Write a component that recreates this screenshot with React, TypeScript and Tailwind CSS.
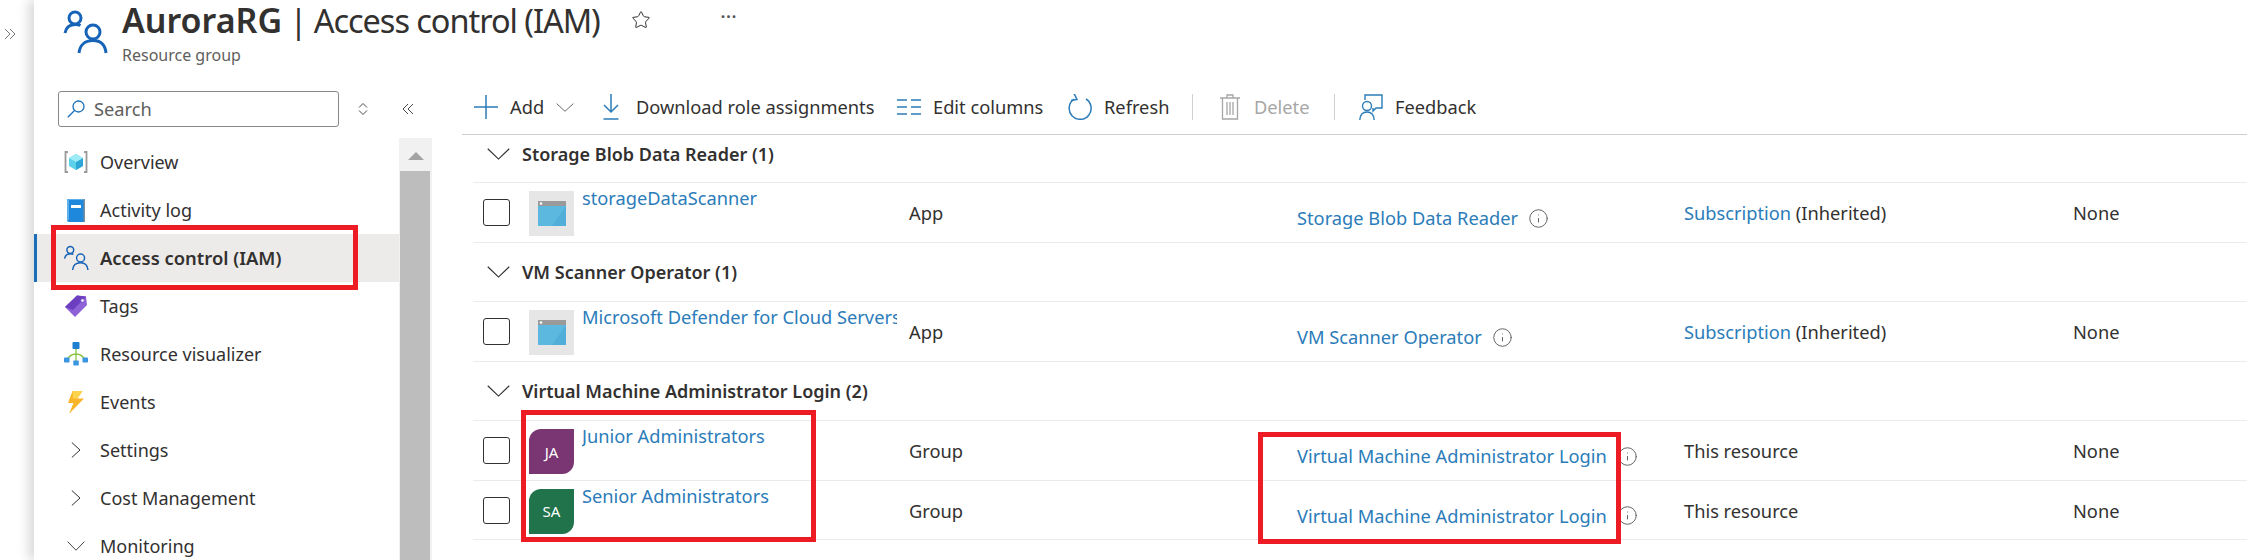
import { Info, Star } from "lucide-react";
import type { ReactNode } from "react";

const UsersIcon = ({ className, weight }: { className: string; weight: string }) => (
  <svg viewBox="0 0 42 42" fill="none" stroke="#1763b8" strokeWidth={weight} className={`overflow-visible ${className}`}>
    <circle cx="11" cy="7" r="6" />
    <path d="M1 22c1-6 5-8.500 10.500-8.500 2 0 3.600.3 5 1" />
    <circle cx="29" cy="21" r="7" />
    <path d="M15 42c.8-8 6-12.500 14-12.500S41.200 34 42 42" />
  </svg>
);

const OverviewIcon = () => (
  <svg viewBox="0 0 24 24" className="w-[24px] h-[24px]">
    <path d="M4 2H1.500v20H4M20 2h2.500v20H20" fill="none" stroke="#9a9a9a" strokeWidth="1.800" />
    <path d="M12 4l7 4v8l-7 4-7-4V8z" fill="#5ed0ea" />
    <path d="M12 12l7-4v8l-7 4z" fill="#2fa6d8" />
    <path d="M12 12L5 8l7-4 7 4z" fill="#9debf7" />
  </svg>
);

const ActivityIcon = () => (
  <svg viewBox="0 0 24 24" className="w-[24px] h-[24px]">
    <path d="M3 1h18v23H5a2 2 0 0 1-2-2z" fill="#1e88dc" />
    <path d="M3 1h18v1H5v20H3z" fill="#5fb0ea" />
    <rect x="7" y="7" width="10" height="3" fill="#ffffff" />
    <rect x="19.500" y="1" width="1.500" height="23" fill="#7f8c99" />
  </svg>
);

const TagIcon = () => (
  <svg viewBox="0 0 24 24" className="w-[24px] h-[24px]">
    <path d="M1 13L13 1.500l9 1 1 8.500L11 23z" fill="#8e62d6" />
    <path d="M1 13L13 1.500l9 1-13 13.500z" fill="#6b3fc0" />
    <circle cx="18.500" cy="6.500" r="1.800" fill="#f0e8fb" stroke="#6b3fc0" strokeWidth="0.6" />
  </svg>
);

const VisualizerIcon = () => (
  <svg viewBox="0 0 24 24" className="w-[24px] h-[24px]">
    <path d="M12 6v16M3 18c2-4 5-6 9-6s7 2 9 6" fill="none" stroke="#86c440" strokeWidth="1.300" />
    <rect x="8.500" y="0" width="7" height="7" rx="1" fill="#1f7fd0" />
    <rect x="0" y="15.500" width="5.500" height="5" rx="0.800" fill="#3a96e0" />
    <rect x="9.300" y="18.500" width="5.500" height="5" rx="0.800" fill="#3a96e0" />
    <rect x="18.500" y="15.500" width="5.500" height="5" rx="0.800" fill="#3a96e0" />
  </svg>
);

const BoltIcon = () => (
  <svg viewBox="0 0 24 24" className="w-[24px] h-[24px]">
    <path d="M8.500 1h10l-5 7.500h6.500L5 24l4.500-11H4z" fill="#f9b52a" />
    <path d="M8.500 1h10l-5 7.500H9z" fill="#fcd34d" />
  </svg>
);

const SearchIcon = () => (
  <svg viewBox="0 0 18 18" fill="none" stroke="#1a6fb8" strokeWidth="1.300" className="w-[18px] h-[18px]">
    <circle cx="11.500" cy="6.500" r="5.500" />
    <path d="M7.500 10.500L.8 17.300" />
  </svg>
);

const SortIcon = () => (
  <svg viewBox="0 0 12 14" fill="none" stroke="#4a4a4a" strokeWidth="1" className="w-[12px] h-[14px]">
    <path d="M2 5.500L6 1.500l4 4M2 8.500l4 4 4-4" />
  </svg>
);

const DoubleChevron = ({ left, color }: { left?: boolean; color: string }) => (
  <svg viewBox="0 0 12 12" fill="none" stroke={color} strokeWidth="1" className="w-[12px] h-[12px]">
    <path d={left ? "M6 1L1 6l5 5M11 1L6 6l5 5" : "M1 1l5 5-5 5M6 1l5 5-5 5"} />
  </svg>
);

const ChevronOpen = ({ className, color }: { className: string; color: string }) => (
  <svg viewBox="0 0 24 13" fill="none" stroke={color} strokeWidth="1.200" preserveAspectRatio="none" className={className}>
    <path d="M.8 .8L12 12 23.200 .8" />
  </svg>
);

const ChevronClosed = () => (
  <svg viewBox="0 0 10 16" fill="none" stroke="#323130" strokeWidth="1" className="w-[10px] h-[16px]">
    <path d="M.8 .5L9 8 .8 15.500" />
  </svg>
);

const PlusIcon = () => (
  <svg viewBox="0 0 24 24" fill="none" stroke="#2b7cb9" strokeWidth="1.500" className="w-[24px] h-[24px]">
    <path d="M12 0v24M0 12h24" />
  </svg>
);

const DownloadIcon = () => (
  <svg viewBox="0 0 16 26" fill="none" stroke="#2b7cb9" strokeWidth="1.500" className="w-[16px] h-[26px]">
    <path d="M8 0v17M1 11l7 7 7-7M0.500 25h15" />
  </svg>
);

const ColumnsIcon = () => (
  <svg viewBox="0 0 24 16" fill="none" stroke="#2b7cb9" strokeWidth="1.500" className="w-[24px] h-[16px]">
    <path d="M0 1h10M14 1h10M0 8h10M14 8h10M0 15h10M14 15h10" />
  </svg>
);

const RefreshIcon = () => (
  <svg viewBox="0 0 24 26" fill="none" stroke="#2b7cb9" strokeWidth="1.500" className="w-[24px] h-[26px]">
    <path d="M18 5a11 11 0 1 1-12 .2" />
    <path d="M4 0l3 6-6 1" transform="translate(2 -0.500)" />
  </svg>
);

const TrashIcon = () => (
  <svg viewBox="0 0 20 26" fill="none" stroke="#a6a6a6" strokeWidth="1.300" className="w-[20px] h-[26px]">
    <path d="M0 4h20M7 4V1h6v3M2.500 4v21h15V4M7 8v13M10 8v13M13 8v13" />
  </svg>
);

const FeedbackIcon = () => (
  <svg viewBox="0 0 24 26" fill="none" stroke="#2b7cb9" strokeWidth="1.400" className="w-[24px] h-[26px]">
    <path d="M6 6V1h17v13h-6l-3 3v-3" />
    <circle cx="8" cy="12" r="4.500" />
    <path d="M.8 26c.3-5 3-8 7.200-8s6.900 3 7.200 8" />
  </svg>
);

const WindowAvatar = () => (
  <div className="w-[45px] h-[45px] bg-[#e6e6e6] flex items-center justify-center">
    <svg viewBox="0 0 28 25" className="w-[28px] h-[25px]">
      <rect width="28" height="25" fill="#5db8e0" />
      <path d="M28 5v20H14z" fill="#51aed9" />
      <rect width="28" height="5" fill="#9a9a9a" />
      <circle cx="3" cy="2.500" r="1.300" fill="#ffffff" />
    </svg>
  </div>
);

const Button = ({ icon, label, width, muted }: { icon: ReactNode; label: string; width: string; muted?: boolean }) => (
  <div className={`flex items-center gap-[12px] shrink-0 ${width}`}>
    {icon}
    <span className={muted ? "text-[#a6a6a6]" : "text-[#323130]"}>{label}</span>
  </div>
);

const navItems = [
  { label: "Overview", icon: <OverviewIcon /> },
  { label: "Activity log", icon: <ActivityIcon /> },
  { label: "Access control (IAM)", icon: <UsersIcon className="w-[24px] h-[24px]" weight="2.600" />, active: true },
  { label: "Tags", icon: <TagIcon /> },
  { label: "Resource visualizer", icon: <VisualizerIcon /> },
  { label: "Events", icon: <BoltIcon /> },
  { label: "Settings", icon: <ChevronClosed /> },
  { label: "Cost Management", icon: <ChevronClosed /> },
  { label: "Monitoring", icon: <ChevronOpen className="w-[18px] h-[10px]" color="#323130" /> },
];

const groups = [
  {
    name: "Storage Blob Data Reader (1)",
    head: "h-[48px] pb-[10px]",
    rows: [{ name: "storageDataScanner", type: "App", role: "Storage Blob Data Reader" }],
  },
  {
    name: "VM Scanner Operator (1)",
    head: "h-[59.5px]",
    rows: [{ name: "Microsoft Defender for Cloud Servers Scanner Resource Provider", type: "App", role: "VM Scanner Operator" }],
  },
  {
    name: "Virtual Machine Administrator Login (2)",
    head: "h-[59.5px]",
    rows: [
      { name: "Junior Administrators", type: "Group", role: "Virtual Machine Administrator Login", initials: "JA", color: "bg-[#7a3573]" },
      { name: "Senior Administrators", type: "Group", role: "Virtual Machine Administrator Login", initials: "SA", color: "bg-[#20734a]" },
    ],
  },
];

export default function App() {
  return (
    <div className="relative flex h-[560px] w-[2247px] overflow-hidden bg-white font-['Noto_Sans',sans-serif] text-[18.25px] leading-[24px] text-[#323130]">
      <div className="w-[34px] shrink-0 pl-[4px] pt-[28px]">
        <DoubleChevron color="#777777" />
      </div>

      <div className="flex-1 flex flex-col shadow-[-6px_0_10px_rgba(0,0,0,0.14)]">
        <div className="h-[84px] flex pl-[30px]">
          <UsersIcon className="w-[42px] h-[42px] mt-[11px]" weight="3" />
          <div className="ml-[16px]">
            <div className="flex items-center h-[40px]">
              <h1 className="text-[32.5px] tracking-[-1.05px] leading-[40px] whitespace-nowrap">
                <span className="font-semibold text-[34px] tracking-normal">AuroraRG</span> | Access control (IAM)
              </h1>
              <Star size={20} strokeWidth={1.2} color="#323130" className="ml-[31px]" />
              <span className="ml-[70px] -mt-[8px] text-[#555555] text-[16px] font-bold tracking-[1px]">···</span>
            </div>
            <div className="text-[16px] leading-[22px] mt-[4px] text-[#605e5c]">Resource group</div>
          </div>
        </div>

        <div className="flex-1 flex min-h-0">
          <div className="w-[428px] shrink-0 flex flex-col">
            <div className="h-[54px] flex pl-[24px] pt-[7px]">
              <div className="w-[281px] h-[36px] border border-[#8a8886] rounded-[3px] flex items-center gap-[9px] pl-[8px] text-[#605e5c]">
                <SearchIcon />
                Search
              </div>
              <div className="ml-[18px] h-[36px] flex items-center">
                <SortIcon />
              </div>
              <div className="ml-[33px] h-[36px] flex items-center">
                <DoubleChevron left color="#4a4a4a" />
              </div>
            </div>
            <div className="flex flex-1 min-h-0">
              <div className="w-[365px] shrink-0 text-[18px]">
                {navItems.map((item) => (
                  <div
                    key={item.label}
                    className={`h-[48px] flex items-center gap-[12px] pl-[30px] ${
                      item.active ? "bg-[#edebe9] border-l-[3px] border-[#1a6fb8] !pl-[27px] font-semibold text-[18.4px]" : ""
                    }`}
                  >
                    <span className="w-[24px] h-[24px] flex items-center justify-center">{item.icon}</span>
                    {item.label}
                  </div>
                ))}
              </div>
              <div className="w-[33px] shrink-0 bg-[#f1f1f1] flex flex-col">
                <div className="h-[33px] flex justify-center pt-[14px]">
                  <div className="w-0 h-0 border-x-[8px] border-x-transparent border-b-[8px] border-b-[#a3a3a3]" />
                </div>
                <div className="flex-1 ml-[1px] w-[30px] bg-[#bdbdbd]" />
              </div>
            </div>
          </div>

          <div className="flex-1 min-w-0">
            <div className="h-[51px] border-b border-[#d2d0ce] flex items-center pl-[12px] pb-[4px]">
              <div className="flex items-center shrink-0 w-[129px]">
                <PlusIcon />
                <span className="ml-[12px]">Add</span>
                <ChevronOpen className="w-[18px] h-[9px] ml-[12px]" color="#555555" />
              </div>
              <Button icon={<DownloadIcon />} label="Download role assignments" width="w-[294px] !gap-[17px]" />
              <Button icon={<ColumnsIcon />} label="Edit columns" width="w-[171px]" />
              <Button icon={<RefreshIcon />} label="Refresh" width="w-[124px]" />
              <div className="w-px h-[26px] bg-[#d2d0ce] mr-[27px]" />
              <Button icon={<TrashIcon />} label="Delete" width="w-[114px] !gap-[14px]" muted />
              <div className="w-px h-[26px] bg-[#d2d0ce] mr-[24px]" />
              <Button icon={<FeedbackIcon />} label="Feedback" width="w-[130px]" />
            </div>

            <div className="ml-[11px]">
              {groups.map((group) => (
                <div key={group.name}>
                  <div className={`flex items-center border-b border-[#edebe9] pl-[14px] font-semibold text-[18px] ${group.head}`}>
                    <ChevronOpen className="w-[23px] h-[12px]" color="#323130" />
                    <span className="ml-[12px]">{group.name}</span>
                  </div>
                  {group.rows.map((row) => (
                    <div
                      key={row.name}
                      className="h-[59.5px] border-b border-[#edebe9] grid grid-cols-[56px_53px_327px_388px_387px_389px_1fr] items-start"
                    >
                      <div className="pl-[10px] pt-[16px]">
                        <div className="w-[27px] h-[27px] border border-[#323130] rounded-[3px]" />
                      </div>
                      <div className="pt-[8px]">
                        {row.color ? (
                          <div className={`w-[45px] h-[45px] rounded-tl-[12px] rounded-br-[12px] text-white text-[15px] flex items-center justify-center ${row.color}`}>
                            {row.initials}
                          </div>
                        ) : (
                          <WindowAvatar />
                        )}
                      </div>
                      <div className="pt-[3px] w-[315px] overflow-hidden whitespace-nowrap text-[#2b7cb9]">{row.name}</div>
                      <div className="pt-[18px]">{row.type}</div>
                      <div className="pt-[23px] flex items-center whitespace-nowrap text-[#2b7cb9]">
                        {row.role}
                        <Info size={21} strokeWidth={1.1} color="#605e5c" className="ml-[10px] shrink-0" />
                      </div>
                      <div className="pt-[18px] whitespace-nowrap">
                        {row.color ? (
                          "This resource"
                        ) : (
                          <>
                            <span className="text-[#2b7cb9]">Subscription</span> (Inherited)
                          </>
                        )}
                      </div>
                      <div className="pt-[18px]">None</div>
                    </div>
                  ))}
                </div>
              ))}
            </div>
          </div>
        </div>
      </div>

      <div className="absolute left-[51px] top-[225px] w-[307px] h-[65px] border-[5px] border-[#ed1c24]" />
      <div className="absolute left-[521px] top-[410px] w-[295px] h-[132px] border-[5px] border-[#ed1c24]" />
      <div className="absolute left-[1258px] top-[432px] w-[363px] h-[112px] border-[5px] border-[#ed1c24]" />
    </div>
  );
}
